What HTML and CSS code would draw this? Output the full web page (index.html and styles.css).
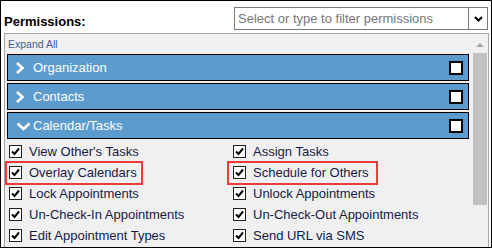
FILE: index.html
```html
<!DOCTYPE html>
<html>
<head>
<meta charset="utf-8">
<link rel="stylesheet" href="styles.css">
</head>
<body>
<div class="frame">
  <div class="top">
    <div class="label">Permissions:</div>
    <div class="select">
      <span class="placeholder">Select or type to filter permissions</span>
      <span class="sel-arrow"><svg width="9" height="6" viewBox="0 0 9 6"><polyline points="1,1 4.5,4.5 8,1" fill="none" stroke="#000" stroke-width="2"/></svg></span>
    </div>
  </div>
  <div class="panel">
    <div class="content">
      <div class="expand">Expand All</div>
      <div class="group">
        <span class="chev"><svg width="10" height="12" viewBox="0 0 10 12"><polyline points="2,1 7.5,6 2,11" fill="none" stroke="#fff" stroke-width="2.6"/></svg></span>
        <span class="gname">Organization</span>
        <span class="gbox"></span>
      </div>
      <div class="group">
        <span class="chev"><svg width="10" height="12" viewBox="0 0 10 12"><polyline points="2,1 7.5,6 2,11" fill="none" stroke="#fff" stroke-width="2.6"/></svg></span>
        <span class="gname">Contacts</span>
        <span class="gbox"></span>
      </div>
      <div class="group">
        <span class="chev down"><svg width="15" height="9" viewBox="0 0 15 9"><polyline points="1.5,1.5 7.5,7 13.5,1.5" fill="none" stroke="#fff" stroke-width="2.6"/></svg></span>
        <span class="gname">Calendar/Tasks</span>
        <span class="gbox"></span>
      </div>
      <div class="items">
        <div class="item"><span class="cb"><svg width="11" height="11" viewBox="0 0 11 11"><polyline points="2,5.5 4.5,8 9,2.5" fill="none" stroke="#000" stroke-width="2"/></svg></span><span>View Other's Tasks</span></div>
        <div class="item"><span class="cb"><svg width="11" height="11" viewBox="0 0 11 11"><polyline points="2,5.5 4.5,8 9,2.5" fill="none" stroke="#000" stroke-width="2"/></svg></span><span>Assign Tasks</span></div>
        <div class="item"><span class="hl hl-a"><span class="cb"><svg width="11" height="11" viewBox="0 0 11 11"><polyline points="2,5.5 4.5,8 9,2.5" fill="none" stroke="#000" stroke-width="2"/></svg></span><span>Overlay Calendars</span></span></div>
        <div class="item"><span class="hl hl-b"><span class="cb"><svg width="11" height="11" viewBox="0 0 11 11"><polyline points="2,5.5 4.5,8 9,2.5" fill="none" stroke="#000" stroke-width="2"/></svg></span><span>Schedule for Others</span></span></div>
        <div class="item"><span class="cb"><svg width="11" height="11" viewBox="0 0 11 11"><polyline points="2,5.5 4.5,8 9,2.5" fill="none" stroke="#000" stroke-width="2"/></svg></span><span>Lock Appointments</span></div>
        <div class="item"><span class="cb"><svg width="11" height="11" viewBox="0 0 11 11"><polyline points="2,5.5 4.5,8 9,2.5" fill="none" stroke="#000" stroke-width="2"/></svg></span><span>Unlock Appointments</span></div>
        <div class="item"><span class="cb"><svg width="11" height="11" viewBox="0 0 11 11"><polyline points="2,5.5 4.5,8 9,2.5" fill="none" stroke="#000" stroke-width="2"/></svg></span><span>Un-Check-In Appointments</span></div>
        <div class="item"><span class="cb"><svg width="11" height="11" viewBox="0 0 11 11"><polyline points="2,5.5 4.5,8 9,2.5" fill="none" stroke="#000" stroke-width="2"/></svg></span><span>Un-Check-Out Appointments</span></div>
        <div class="item"><span class="cb"><svg width="11" height="11" viewBox="0 0 11 11"><polyline points="2,5.5 4.5,8 9,2.5" fill="none" stroke="#000" stroke-width="2"/></svg></span><span>Edit Appointment Types</span></div>
        <div class="item"><span class="cb"><svg width="11" height="11" viewBox="0 0 11 11"><polyline points="2,5.5 4.5,8 9,2.5" fill="none" stroke="#000" stroke-width="2"/></svg></span><span>Send URL via SMS</span></div>
      </div>
    </div>
    <div class="scroll">
      <div class="sarrow"><span class="tri"></span></div>
      <div class="thumb"></div>
    </div>
  </div>
</div>
</body>
</html>
```
FILE: styles.css
```css
* { box-sizing: border-box; }
html, body { margin: 0; padding: 0; background: #fff; }
body { font-family: "Liberation Sans", Arial, sans-serif; }

.frame {
  width: 492px;
  height: 248px;
  border: 1px solid #000;
  overflow: hidden;
  padding: 0 2px 0 3px;
  background: #fff;
}

.top {
  display: flex;
  padding-top: 6px;
  height: 32px;
}
.label {
  font-size: 13px;
  font-weight: bold;
  line-height: 15px;
  margin-top: 7px;
  color: #000;
}
.select {
  margin-left: auto;
  margin-right: 1px;
  width: 254px;
  height: 23px;
  border: 1px solid #7a7a7a;
  display: flex;
  align-items: center;
  background: #fff;
}
.placeholder {
  flex: 1;
  padding-left: 3px;
  font-size: 13px;
  color: #777;
  white-space: nowrap;
}
.sel-arrow {
  width: 19px;
  height: 100%;
  border-left: 1px solid #7a7a7a;
  display: flex;
  align-items: center;
  justify-content: center;
  padding-top: 1px;
}
.sel-arrow svg { display: block; }

.panel {
  display: flex;
  border: 1px solid #a5a5a5;
  background: #f0f0f0;
  height: 230px;
  padding-right: 1px;
}
.content { flex: 1; min-width: 0; }
.expand {
  padding: 1px 0 0 3px;
  height: 20px;
  line-height: 19px;
  font-size: 10.5px;
  color: #3b5f8e;
}
.group {
  display: flex;
  align-items: center;
  height: 27px;
  margin: 0 4px 2px 2px;
  background: #5b9bcd;
  border: 1px solid #000;
  padding: 0 5px 0 7px;
  color: #fff;
  font-size: 13px;
}
.chev {
  width: 18px;
  display: flex;
  align-items: center;
}
.chev svg { display: block; }
.chev.down { padding-left: 1px; padding-top: 1px; }
.gname { flex: 1; }
.gbox {
  width: 14px;
  height: 14px;
  background: #fff;
  border: 2px solid #000;
}

.items {
  display: grid;
  grid-template-columns: 224px 1fr;
  grid-auto-rows: 21px;
  padding-left: 4px;
  font-size: 13px;
  color: #161a45;
}
.item {
  display: flex;
  align-items: center;
  white-space: nowrap;
}
.hl {
  position: relative;
  display: flex;
  align-items: center;
  height: 100%;
}
.hl::after {
  content: "";
  position: absolute;
  top: -1px;
  bottom: -2px;
  border: 2px solid #ec3b3b;
}
.hl-a::after { left: -4px; right: -6px; }
.hl-b::after { left: -6px; right: -9px; }
.cb {
  width: 13px;
  height: 13px;
  border: 1px solid #222;
  background: #fff;
  margin-right: 7px;
  display: flex;
  align-items: center;
  justify-content: center;
  flex: none;
}
.cb svg { display: block; }

.scroll {
  width: 14px;
  display: flex;
  flex-direction: column;
}
.sarrow {
  height: 19px;
  display: flex;
  justify-content: center;
  padding-top: 9px;
}
.tri {
  width: 0;
  height: 0;
  border-left: 4px solid transparent;
  border-right: 4px solid transparent;
  border-bottom: 4px solid #a3a3a3;
}
.thumb {
  height: 152px;
  background: #c1c1c1;
}
```
